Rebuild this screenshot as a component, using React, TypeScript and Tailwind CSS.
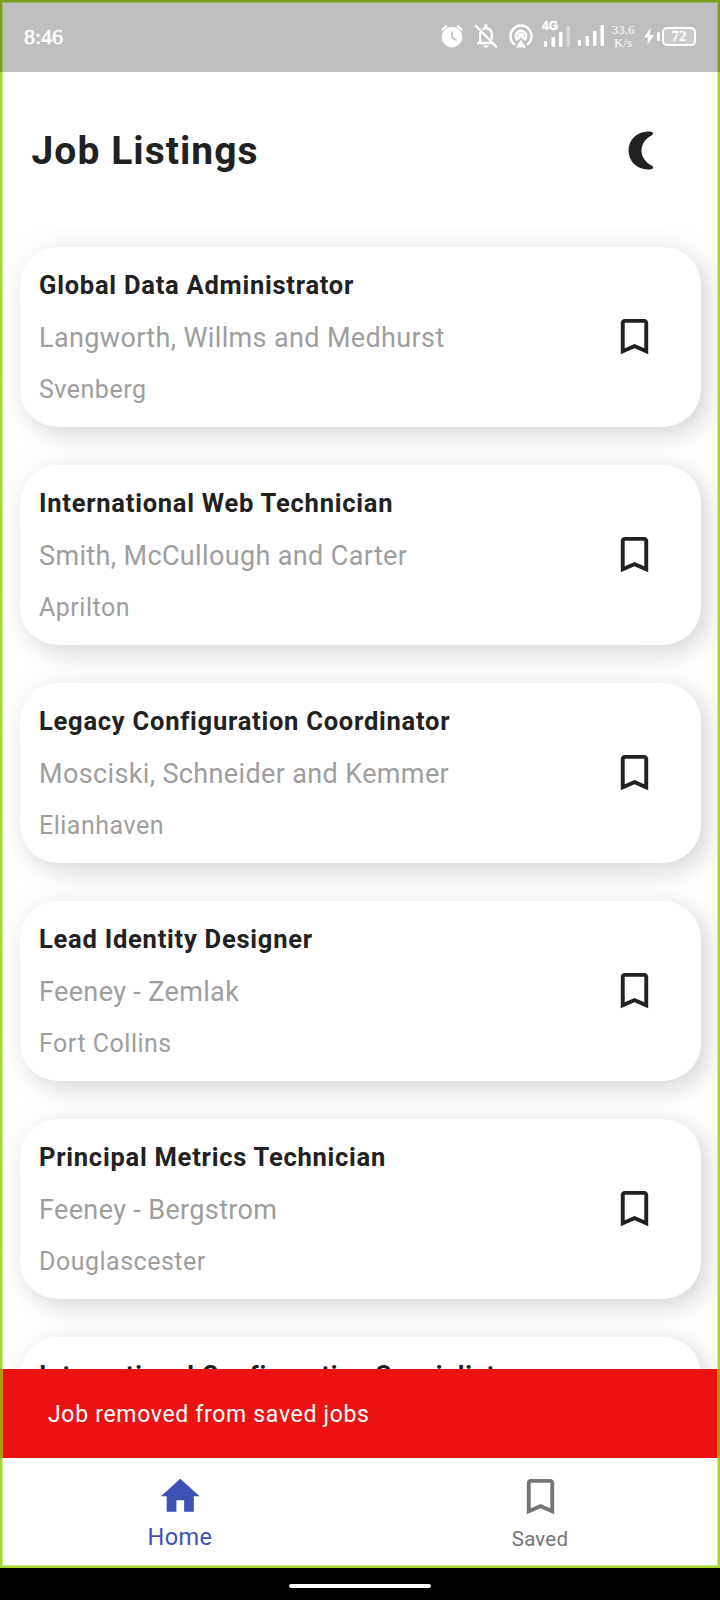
import React from "react";

const jobs = [
  { title: "Global Data Administrator", company: "Langworth, Willms and Medhurst", city: "Svenberg" },
  { title: "International Web Technician", company: "Smith, McCullough and Carter", city: "Aprilton" },
  { title: "Legacy Configuration Coordinator", company: "Mosciski, Schneider and Kemmer", city: "Elianhaven" },
  { title: "Lead Identity Designer", company: "Feeney - Zemlak", city: "Fort Collins" },
  { title: "Principal Metrics Technician", company: "Feeney - Bergstrom", city: "Douglascester" },
  { title: "International Configuration Specialist", company: "", city: "" },
];

function Bookmark({ className = "" }: { className?: string }) {
  return (
    <svg viewBox="0 0 24 24" fill="currentColor" className={`size-[47px] shrink-0 ${className}`}>
      <path d="M17 3H7c-1.1 0-1.99.9-1.99 2L5 21l7-3 7 3V5c0-1.1-.9-2-2-2zm0 15-5-2.18L7 18V5h10v13z" />
    </svg>
  );
}

function StatusBar() {
  return (
    <header className="relative z-20 flex h-[72px] shrink-0 items-center bg-black/25 pl-6 pr-6 text-white">
      <span className="pt-px font-['Liberation_Serif',serif] text-[22px] leading-none [-webkit-text-stroke:0.6px_white]">8:46</span>
      <div className="ml-auto flex h-[70px] items-center">
        <svg viewBox="0 0 24 24" fill="currentColor" className="-mt-px size-[26px]">
          <path d="M22 5.72l-4.6-3.86-1.29 1.53 4.6 3.86L22 5.72zM7.88 3.39L6.6 1.86 2 5.71l1.29 1.53 4.59-3.85z" />
          <path fillRule="evenodd" d="M12 3.500a9.500 9.500 0 1 0 0 19 9.500 9.500 0 0 0 0-19zm3.700 13L11.200 13.700V8h1.500v4.900l3.800 2.300z" />
        </svg>
        <svg viewBox="0 0 24 24" fill="none" stroke="currentColor" strokeWidth="2.300" className="ml-[9px] size-[24px]">
          <path d="M1.200 1.200l21.600 22M6.200 8v10M3.300 19h15M8.500 5.300a5.800 5.800 0 0 1 9.300 4.700v5.500" />
          <path d="M10.500.5h3v3.500h-3zM9.500 21.300h5a2.500 2.500 0 0 1-5 0z" fill="currentColor" stroke="none" />
        </svg>
        <svg viewBox="0 0 24 24" fill="none" stroke="currentColor" strokeWidth="2.500" className="-mt-px ml-[11px] size-[24px]">
          <path d="M6 20.700a10.500 10.500 0 1 1 12 0" />
          <path d="M12 15.500l5 8H7zM12 5.500a6.500 6.500 0 0 1 6.500 6.500c0 2-1 3.700-2.500 5L12 13.500 8 17c-1.500-1.300-2.500-3-2.500-5A6.500 6.500 0 0 1 12 5.500z" fill="currentColor" stroke="none" />
          <path d="M8.600 13.500a3.700 3.700 0 1 1 6.800 0" stroke="#bfbfbf" strokeWidth=".7" />
        </svg>
        <div className="-mt-px ml-[9px] flex h-[30px] w-[29px] flex-col">
          <span className="h-[11px] font-['Liberation_Sans',sans-serif] text-[12px] font-bold leading-[10px] [-webkit-text-stroke:0.4px_white]">4G</span>
          <svg viewBox="0 0 29 22" fill="currentColor" className="-mt-[6px] ml-[2px] h-[22px] w-[29px] shrink-0">
            <rect x="0" y="15" width="3" height="6" rx="1" />
            <rect x="7.500" y="11" width="3.500" height="10" rx="1" />
            <rect x="15" y="6" width="3.500" height="15" rx="1" />
            <rect x="22.500" y="0" width="3.500" height="21" rx="1" opacity=".4" />
          </svg>
        </div>
        <svg viewBox="0 0 27 22" fill="currentColor" className="ml-[7px] h-[22px] w-[27px]">
          <rect x="0" y="15" width="3" height="6" rx="1" />
          <rect x="7.500" y="11" width="3.500" height="10" rx="1" />
          <rect x="15" y="6" width="3.500" height="15" rx="1" />
          <rect x="22.500" y="0" width="3.500" height="21" rx="1" />
        </svg>
        <div className="-mt-px ml-[7px] flex w-[22px] flex-col items-center font-['Liberation_Serif',serif] text-[13px] leading-[13px]">
          <span>33.6</span>
          <span>K/s</span>
        </div>
        <svg viewBox="0 0 10 17" fill="currentColor" className="ml-[10px] mt-px h-[17px] w-[10px]">
          <path d="M6.500 0 0 9.500h4L3.500 17 10 7H6z" />
        </svg>
        <span className="ml-[3px] h-[9px] w-[3px] rounded-sm bg-white" />
        <span className="ml-[2px] flex h-[19px] w-[34px] items-center justify-center rounded-[5px] border-2 border-white bg-white/20 font-['Liberation_Serif',serif] text-[15px] font-bold leading-none">72</span>
      </div>
    </header>
  );
}

export default function App() {
  return (
    <div className="flex h-[1600px] w-[720px] flex-col overflow-hidden bg-black font-[Roboto,sans-serif] text-[#212121]">
      <div className="relative flex h-[1568px] flex-col overflow-hidden bg-white">
        <StatusBar />
        <div className="flex h-[157px] shrink-0 items-center justify-between pl-[31.500px] pr-[67px]">
          <h1 className="pt-px text-[39px] font-bold leading-none tracking-[1.05px]">Job Listings</h1>
          <svg viewBox="0 0 25 39" fill="currentColor" className="-mt-px h-[39px] w-[25px]">
            <path d="M20 .5C9 .5.500 9 .500 19.500S9 38.500 20 38.500c2 0 3.500-.2 4.500-.7.800-.8.600-2.400-.5-3C17.500 31.500 13.500 26 13.500 19.500S17.500 7.500 24 4.200c1.100-.6 1.300-2.200.5-3C23.500.7 22 .5 20 .5z" />
          </svg>
        </div>
        <main className="flex min-h-0 flex-1 flex-col gap-[38px] overflow-hidden px-[19.500px] pt-[17.500px]">
          {jobs.map((j) => (
            <article key={j.title} className="flex h-[180px] shrink-0 items-center justify-between rounded-[38px] bg-white pl-[19.5px] pr-[43px] shadow-[9px_9px_22px_rgba(0,0,0,0.12),0_0_36px_rgba(0,0,0,0.06)]">
              <div className="flex flex-col pt-px">
                <h2 className="text-[25.500px] font-bold leading-[30px] tracking-[0.76px]">{j.title}</h2>
                <p className="mt-[22px] h-[32px] text-[27px] leading-[32px] tracking-[0.36px] text-[#9e9e9e]">{j.company}</p>
                <p className="mt-[21px] h-[30px] text-[25px] leading-[30px] tracking-[0.5px] text-[#9e9e9e]">{j.city}</p>
              </div>
              <Bookmark />
            </article>
          ))}
        </main>
        <div className="relative z-20 flex h-[89px] shrink-0 items-center border-x-[3px] border-[#b09a10] bg-[#ec1212] pl-[45px] pt-[3px] text-[23px] tracking-[0.68px] text-white">
          Job removed from saved jobs
        </div>
        <nav className="grid h-[110px] shrink-0 grid-cols-2 bg-white">
          <div className="flex flex-col items-center pt-[14.500px] text-[#3f51b5]">
            <svg viewBox="0 0 24 24" fill="currentColor" className="size-[46.500px]">
              <path d="M10 20v-6h4v6h5v-8h3L12 3 2 12h3v8z" />
            </svg>
            <span className="mt-[4px] text-[23.500px] leading-[28px] tracking-[0.4px]">Home</span>
          </div>
          <div className="flex flex-col items-center pt-[14.500px] text-[#757575]">
            <Bookmark />
            <span className="mt-[6px] text-[20.500px] leading-[26px] tracking-[0.2px]">Saved</span>
          </div>
        </nav>
        <div className="pointer-events-none absolute inset-0 z-10 border-2 border-[#a8d62b] shadow-[inset_0_0_0_1px_#d3ea94]" />
      </div>
      <div className="flex h-8 items-center justify-center pt-1">
        <div className="h-1 w-[142px] rounded-full bg-white" />
      </div>
    </div>
  );
}
